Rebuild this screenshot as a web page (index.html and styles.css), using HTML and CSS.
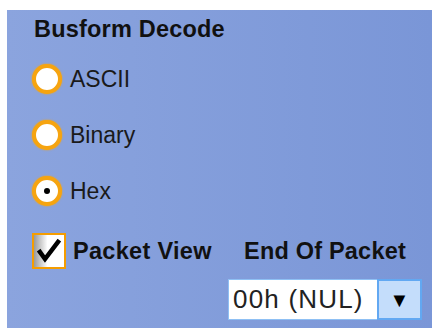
FILE: index.html
```html
<!DOCTYPE html>
<html lang="en">
<head>
    <meta charset="UTF-8">
    <title>Busform Decode</title>
    <link rel="stylesheet" href="styles.css">
</head>
<body>
    <div class="panel">
        <div class="title">Busform Decode</div>

        <div class="radios">
            <div class="radio-row">
                <span class="radio"></span>
                <span class="radio-label">ASCII</span>
            </div>
            <div class="radio-row">
                <span class="radio"></span>
                <span class="radio-label">Binary</span>
            </div>
            <div class="radio-row">
                <span class="radio checked"></span>
                <span class="radio-label">Hex</span>
            </div>
        </div>

        <div class="bottom">
            <div class="check-row">
                <span class="checkbox">
                    <svg width="30" height="30" viewBox="0 0 30 30">
                        <polyline points="6,16 11,23 24,6" fill="none" stroke="#000" stroke-width="4.5" stroke-linecap="square"/>
                    </svg>
                </span>
                <span class="check-label">Packet View</span>
            </div>
            <div class="eop">
                <div class="eop-label">End Of Packet</div>
                <div class="select">
                    <div class="select-value">00h (NUL)</div>
                    <div class="select-btn">&#9660;</div>
                </div>
            </div>
        </div>
    </div>
</body>
</html>
```

FILE: styles.css
```css
body {
    margin: 0;
    background: white;
    font-family: "Liberation Sans", Arial, sans-serif;
}
.panel {
    margin: 10px 1px 0 7px;
    height: 318px;
    padding: 5px 0 0 25px;
    box-sizing: border-box;
    background: linear-gradient(to right, #8ba4de, #7a96d7);
    color: #111;
}
.title {
    font-size: 23.5px;
    font-weight: bold;
    line-height: 28px;
    padding-left: 2px;
    letter-spacing: 0.2px;
}
.radios {
    margin-top: 8px;
}
.radio-row {
    display: flex;
    align-items: center;
    height: 56px;
}
.radio {
    width: 22px;
    height: 22px;
    border-radius: 50%;
    background: white;
    border: 4px solid #f6a410;
    box-shadow: 0 0 2px #f6a410;
    display: flex;
    align-items: center;
    justify-content: center;
}
.radio.checked::after {
    content: "";
    width: 6px;
    height: 6px;
    border-radius: 50%;
    background: #000;
}
.radio-label {
    font-size: 23px;
    line-height: 30px;
    margin-left: 8px;
    color: #1a1a1a;
}
.bottom {
    display: flex;
    margin-top: 14px;
}
.check-row {
    display: flex;
    align-items: center;
    height: 36px;
    width: 180px;
    flex-shrink: 0;
    white-space: nowrap;
}
.checkbox {
    width: 30px;
    height: 32px;
    border: 2px solid #f59d00;
    background: linear-gradient(to right, #9a9a9a, #ffffff 45%);
    display: flex;
    align-items: center;
    justify-content: center;
    flex-shrink: 0;
}
.check-label {
    font-size: 23.5px;
    font-weight: bold;
    margin-left: 7px;
    letter-spacing: 0.3px;
}
.eop {
    margin-left: 16px;
    width: 194px;
    display: flex;
    flex-direction: column;
    align-items: center;
}
.eop-label {
    font-size: 23.5px;
    font-weight: bold;
    line-height: 36px;
    letter-spacing: 0.2px;
    white-space: nowrap;
}
.select {
    margin-top: 10px;
    width: 194px;
    height: 41px;
    display: flex;
    box-sizing: border-box;
    border: 1px solid #8fc0f4;
}
.select-value {
    flex: 1;
    background: white;
    font-size: 26px;
    line-height: 39px;
    padding-left: 4px;
    color: #222;
    letter-spacing: 1.2px;
    white-space: nowrap;
}
.select-btn {
    width: 45px;
    box-sizing: border-box;
    background: #c4ddfb;
    border: 2px solid #62a8f2;
    margin: -1px -1px -1px 0;
    font-size: 20px;
    text-align: center;
    line-height: 39px;
    color: #000;
}
```
